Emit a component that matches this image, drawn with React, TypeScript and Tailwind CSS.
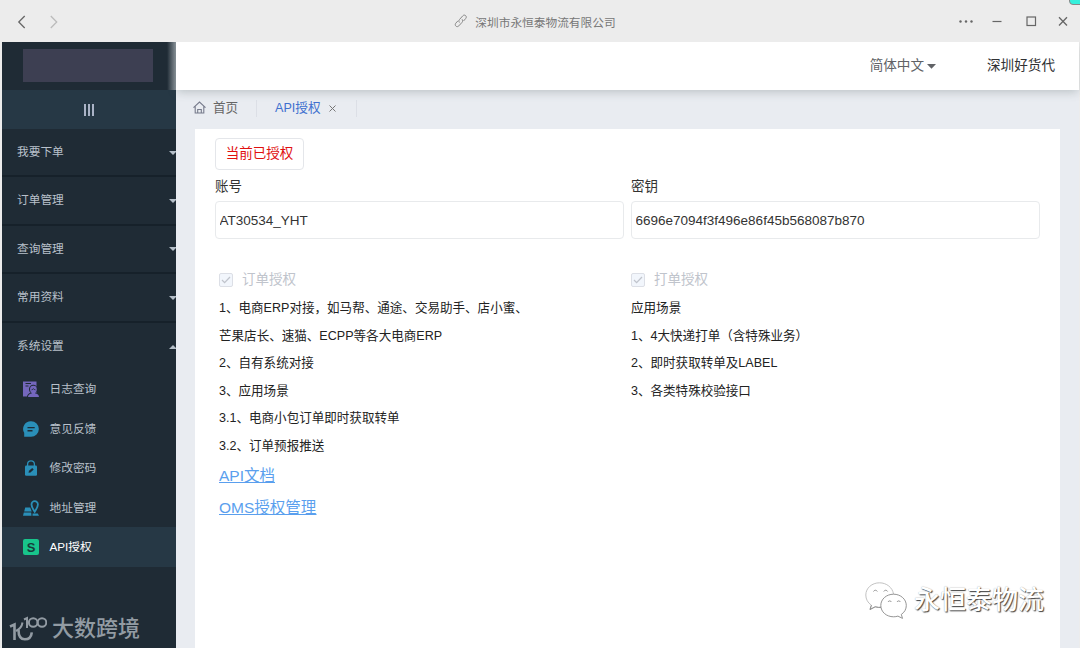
import { useState } from 'react';

type IconType = 'log' | 'feedback' | 'password' | 'address' | 'api';

interface SubItem {
  id: IconType;
  label: string;
}

const menus = ['我要下单', '订单管理', '查询管理', '常用资料', '系统设置'];

const subItems: SubItem[] = [
  { id: 'log', label: '日志查询' },
  { id: 'feedback', label: '意见反馈' },
  { id: 'password', label: '修改密码' },
  { id: 'address', label: '地址管理' },
  { id: 'api', label: 'API授权' },
];

const orderLines = [
  '1、电商ERP对接，如马帮、通途、交易助手、店小蜜、',
  '芒果店长、速猫、ECPP等各大电商ERP',
  '2、自有系统对接',
  '3、应用场景',
  '3.1、电商小包订单即时获取转单',
  '3.2、订单预报推送',
];

const printLines = ['应用场景', '1、4大快递打单（含特殊业务）', '2、即时获取转单及LABEL', '3、各类特殊校验接口'];

const SubIcon = ({ type }: { type: IconType }) => {
  switch (type) {
    case 'log':
      return (
        <svg width="16" height="16" viewBox="0 0 16 16">
          <path d="M0 0.5h13.500v15H0z" fill="#7467bd" />
          <path d="M2.500 2.500h5.500M2.500 5h3" stroke="#1f2b35" strokeWidth="1" />
          <path d="M4 16c.2-2.500 1.500-3.600 3.700-4.200C6.300 10.600 6 9.500 6 8a4.300 4.300 0 0 1 8.600 0c0 1.500-.4 2.700-1.600 3.800L16 13v3z" fill="#1f2b35" />
          <path d="M5 16c.2-2.200 1.600-3.100 4.100-3.700C7.600 11.300 7 9.900 7 8.200a3.400 3.400 0 0 1 6.800 0c0 1.700-.6 3.100-1.900 4.100 2.600.6 4 1.500 4.100 3.700z" fill="#7467bd" />
          <path d="M8.600 8.800c.9 0 1.500-.4 1.800-1.200.5.800 1.200 1.200 2 1.200" fill="none" stroke="#1f2b35" strokeWidth="0.900" />
        </svg>
      );
    case 'feedback':
      return (
        <svg width="16" height="16" viewBox="0 0 16 16">
          <path d="M8.100 0.200a7.700 7.700 0 1 1 0 15.500H1.200v-3.900A7.700 7.700 0 0 1 8.100.2z" fill="#2a8fb8" />
          <path d="M4.500 6.600h7.200M4.500 9.700h5" stroke="#1f2b35" strokeWidth="1.400" />
        </svg>
      );
    case 'password':
      return (
        <svg width="16" height="16" viewBox="0 0 16 16">
          <path d="M4.600 6V4.200a3.400 3.400 0 0 1 6.800 0V6" fill="none" stroke="#2a8fb8" strokeWidth="1.300" />
          <rect x="2" y="5.500" width="12" height="10.200" rx="1.200" fill="#2a8fb8" />
          <path d="M5.500 12.800l.5-2 3.200-2.800 1.500 1.500-3.200 2.900z" fill="#1f2b35" />
        </svg>
      );
    case 'address':
      return (
        <svg width="16" height="16" viewBox="0 0 16 16">
          <path d="M11.700 1.200a3.200 3.200 0 0 1 3.200 3.200c0 2.300-3.200 7.400-3.200 7.400S8.500 6.700 8.500 4.400a3.200 3.200 0 0 1 3.200-3.200z" fill="none" stroke="#2a8fb8" strokeWidth="1.800" />
          <path d="M2.200 7.500h5l1.500 4H1.200zM.8 12.600h7.400l.3 3.100H0zM9.600 13.400h5.200l1.200 2.300H9.500z" fill="#2a8fb8" />
        </svg>
      );
    case 'api':
      return (
        <span className="flex h-4 w-4 items-center justify-center rounded-[2px] bg-[#18c48b] text-[13px] font-bold leading-none text-[#173b3a]">
          S
        </span>
      );
  }
};

const TitleBar = () => (
  <div className="z-20 flex h-[42px] shrink-0 items-center justify-between bg-[#ececec] pl-[15px] pr-[10px] text-[#666]">
    <div className="flex w-[96px] items-center gap-[17px]">
      <svg width="15" height="15" viewBox="0 0 15 15" fill="none" stroke="#666" strokeWidth="1.300">
        <path d="M9.700 2L3.800 8l5.900 6" />
      </svg>
      <svg width="15" height="15" viewBox="0 0 15 15" fill="none" stroke="#bbb" strokeWidth="1.300">
        <path d="M3.800 2l5.900 6-5.900 6" />
      </svg>
    </div>
    <div className="flex items-center gap-[7px] pt-[3px] text-[11.7px] text-[#777]">
      <svg width="14" height="14" viewBox="0 0 14 14" fill="none" stroke="#888" strokeWidth="1" strokeLinecap="round" className="mt-[-2px]">
        <path d="M5.200 8.200c-.6-.9-.4-1.900.3-2.700l3.300-3.700c.8-.9 2-.9 2.800-.2.900.8.9 2 .1 2.900L9.800 6.700" />
        <path d="M8.300 5.600c.6.900.5 1.900-.3 2.800l-3.200 3.500c-.8.900-2 1-2.900.2-.8-.8-.9-2-.1-2.900l1.900-2.100" />
      </svg>
      <span>深圳市永恒泰物流有限公司</span>
    </div>
    <div className="flex w-[111px] items-center justify-between">
      <svg width="14" height="12" viewBox="0 0 14 12" fill="#666">
        <circle cx="1.500" cy="6.500" r="1.200" />
        <circle cx="7" cy="6.500" r="1.200" />
        <circle cx="12.500" cy="6.500" r="1.200" />
      </svg>
      <svg width="10" height="12" viewBox="0 0 10 12" stroke="#666" strokeWidth="1.200">
        <path d="M.5 6.500h9" />
      </svg>
      <svg width="11" height="12" viewBox="0 0 11 12" fill="none" stroke="#666" strokeWidth="1.200" className="ml-1">
        <rect x="1" y="2" width="8.500" height="8.500" />
      </svg>
      <svg width="14" height="12" viewBox="0 0 14 12" stroke="#666" strokeWidth="1.300">
        <path d="M3 2.200l8 8.300M11 2.200l-8 8.300" />
      </svg>
    </div>
  </div>
);

const Sidebar = ({ active, onSelect }: { active: IconType; onSelect: (id: IconType) => void }) => (
  <aside className="flex w-[174px] shrink-0 flex-col overflow-hidden bg-[#1f2b35] text-[11.7px] text-[#b9c1cb]">
    <div className="flex h-12 shrink-0 justify-between pl-[21px]">
      <div className="mt-[7px] h-[33px] w-[130px] bg-[#3d3f52]" />
      {/* light of the header falling on the sidebar edge */}
      <div className="w-[9px] bg-linear-to-r from-transparent to-[#8c959b]" />
    </div>
    <button className="flex h-[39px] shrink-0 items-center justify-center gap-[2px] bg-[#263845]">
      <span className="h-3 w-[2px] bg-[#aab3c6]" />
      <span className="h-3 w-[2px] bg-[#aab3c6]" />
      <span className="h-3 w-[2px] bg-[#aab3c6]" />
    </button>
    {menus.map((name, i) => {
      const open = i === menus.length - 1;
      return (
        <div
          key={name}
          className={`flex h-[48.4px] shrink-0 items-center justify-between pb-px pl-[15px] ${open ? '' : 'border-b-2 border-[#16212a]'}`}
        >
          <span>{name}</span>
          <svg width="7" height="4" viewBox="0 0 7 4" fill="#b4bec8" className="mt-[2px]">
            {open ? <path d="M0 4l4-4 4 4z" /> : <path d="M0 0h8l-4 4z" />}
          </svg>
        </div>
      );
    })}
    <div className="-mt-[1.500px] shrink-0">
      {subItems.map(item => (
        <button
          key={item.id}
          onClick={() => onSelect(item.id)}
          className={`flex h-[39.5px] w-full items-center gap-[10.500px] pl-[21px] ${active === item.id ? 'bg-[#263845] text-white' : ''}`}
        >
          <SubIcon type={item.id} />
          <span>{item.label}</span>
        </button>
      ))}
    </div>
    <div className="mt-auto flex items-center gap-[5px] pb-[4px] pl-[7px] text-[22px] font-medium leading-[30px] text-[#929ba3]">
      <svg width="38" height="26" viewBox="0 0 38 26" fill="none" stroke="#929ba3" strokeWidth="2">
        <path d="M1 10.500L5.500 8.500V24" strokeWidth="2.600" />
        <path d="M13.500 6.500c-.5 3.500-2.500 6.500-6.500 8.500" />
        <path d="M9.500 14c0 6.500 2.500 9.300 6.300 9.300s6.500-2.300 7-7" strokeWidth="2.600" />
        <path d="M15 3.500L18 2v10" />
        <circle cx="24.200" cy="6.500" r="4.300" />
        <circle cx="33" cy="6.500" r="4.300" />
      </svg>
      <span>大数跨境</span>
    </div>
  </aside>
);

const TabBar = () => (
  <div className="flex h-[39px] shrink-0 items-center bg-[#e9ecf1] pl-[17px] text-[12.6px] text-[#666]">
    <svg width="13" height="13" viewBox="0 0 13 13" fill="none" stroke="#777b8c" strokeWidth="1.100" className="mt-[-4px]">
      <path d="M.5 6.700L6.500 1l6 5.700M2.200 5.500V12h8.600V5.500" />
      <path d="M4.700 12V8.500h3.600V12" />
    </svg>
    <span className="ml-[7px] w-[43px] pb-[3px]">首页</span>
    <div className="mb-[3px] h-[17px] border-l border-[#dcdfe6]" />
    <div className="flex items-center pb-[3px] pl-[18px]">
      <span className="w-[54px] text-[#4070cf]">API授权</span>
      <svg width="7" height="7" viewBox="0 0 7 7" stroke="#777" strokeWidth="1" className="mt-px">
        <path d="M.5.5l6 6M6.500.5l-6 6" />
      </svg>
    </div>
    <div className="mb-[3px] ml-5 h-[17px] border-l border-[#dcdfe6]" />
  </div>
);

const DisabledCheck = ({ label }: { label: string }) => (
  <div className="flex h-7 items-center gap-[9px] text-[13.5px] text-[#c0c4cc]">
    <span className="flex h-[14px] w-[14px] items-center justify-center rounded-[2px] border border-[#dcdfe6] bg-[#f2f6fc]">
      <svg width="10" height="8" viewBox="0 0 10 8" fill="none" stroke="#c0c4cc" strokeWidth="1.300">
        <path d="M1 4l2.600 2.600L9 1" />
      </svg>
    </span>
    <span className="pt-px">{label}</span>
  </div>
);

const Field = ({ label, value }: { label: string; value: string }) => (
  <label className="flex flex-col text-[13.5px] text-[#333]">
    <span className="h-[31px] leading-[34px]">{label}</span>
    <input
      readOnly
      value={value}
      className="h-[38px] rounded-[4px] border border-[#e8eaec] bg-white px-[3.500px] text-[#333] outline-none"
    />
  </label>
);

const WechatMark = () => (
  <div className="absolute bottom-[29px] right-[16px] flex items-center gap-[6px]">
    <svg width="44" height="38" viewBox="0 0 44 38" fill="white" stroke="#888" strokeWidth="0.900">
      <path d="M29.500 13C28.500 6.500 22.500 1.800 15.500 1.800 8 1.800 1.800 7 1.800 14c0 4.200 2 7.800 5.600 10.200L6 28.500l5.200-2.700c2 .6 4.300.8 6.400.5" stroke="#bbb" />
      <path d="M7.400 24.200L6 28.500l5.200-2.700c2 .6 4.300.8 6.400.5" fill="none" />
      <path d="M29.600 13.200c-7.300 0-12.800 5-12.800 11.300s5.500 11.300 12.800 11.300c1.500 0 3-.2 4.300-.7l4.600 2.300-1.200-4c3.200-2 5-5.300 5-8.900 0-6.300-5.700-11.300-12.700-11.300z" />
      <path d="M9.500 10.500c.8-1.700 3-1.700 3.800 0M19.800 10.500c.8-1.700 3-1.700 3.800 0M24 21c.7-1.500 2.700-1.500 3.400 0M33 21c.7-1.500 2.700-1.500 3.400 0" fill="none" />
    </svg>
    <span className="text-[26px] font-medium leading-[36px] text-white [text-shadow:1px_1px_1px_#444,0_0_1px_#aaa]">永恒泰物流</span>
  </div>
);

export default function App() {
  const [active, setActive] = useState<IconType>('api');

  return (
    <div className="relative flex h-[648px] w-[1080px] flex-col overflow-hidden bg-[#ececec] font-['Liberation_Sans','Noto_Sans_CJK_SC',sans-serif]">
      <TitleBar />
      <div className="flex min-h-0 flex-1 pl-[2px] pr-px">
        <Sidebar active={active} onSelect={setActive} />
        <div className="flex min-w-0 flex-1 flex-col bg-[#e9ecf1]">
          <header className="z-10 flex h-12 shrink-0 items-center justify-end bg-white pr-[24px] text-[13.600px] text-[#303133] shadow-[0_3px_9px_-1px_rgba(80,95,95,0.3)]">
            <span className="pt-px text-[#606266]">简体中文</span>
            <svg width="9" height="5" viewBox="0 0 9 5" fill="#606266" className="ml-[3px] mr-[51px]">
              <path d="M0 0h9l-4.500 4.800z" />
            </svg>
            <span className="pt-px">深圳好货代</span>
          </header>
          <TabBar />
          <main className="relative ml-[19px] mr-[19px] min-h-0 flex-1 bg-white px-5 pt-[9px]">
            <button className="block h-[32px] w-[89px] rounded-[4px] border border-[#e4e6ea] pt-px text-[13.500px] text-[#e01010]">
              当前已授权
            </button>
            <div className="grid grid-cols-2 gap-x-[7px]">
              <Field label="账号" value="AT30534_YHT" />
              <Field label="密钥" value="6696e7094f3f496e86f45b568087b870" />
              <section className="mt-[27px] pl-1">
                <DisabledCheck label="订单授权" />
                <div className="pt-px">
                  {orderLines.map(line => (
                    <p key={line} className="whitespace-nowrap text-[12.550px] leading-[27.500px] text-[#222]">{line}</p>
                  ))}
                </div>
                <div className="flex flex-col items-start text-[15.500px] leading-[32px] text-[#5a9fee] underline">
                  <a href="#">API文档</a>
                  <a href="#">OMS授权管理</a>
                </div>
              </section>
              <section className="mt-[27px]">
                <DisabledCheck label="打单授权" />
                <div className="pt-px">
                  {printLines.map(line => (
                    <p key={line} className="whitespace-nowrap text-[12.550px] leading-[27.500px] text-[#222]">{line}</p>
                  ))}
                </div>
              </section>
            </div>
            <WechatMark />
          </main>
        </div>
      </div>
      <div className="absolute -right-1 -top-1 z-30 h-[9px] w-[15px] rounded-[4px] border border-[#888] bg-[#35f0dc]" />
    </div>
  );
}
